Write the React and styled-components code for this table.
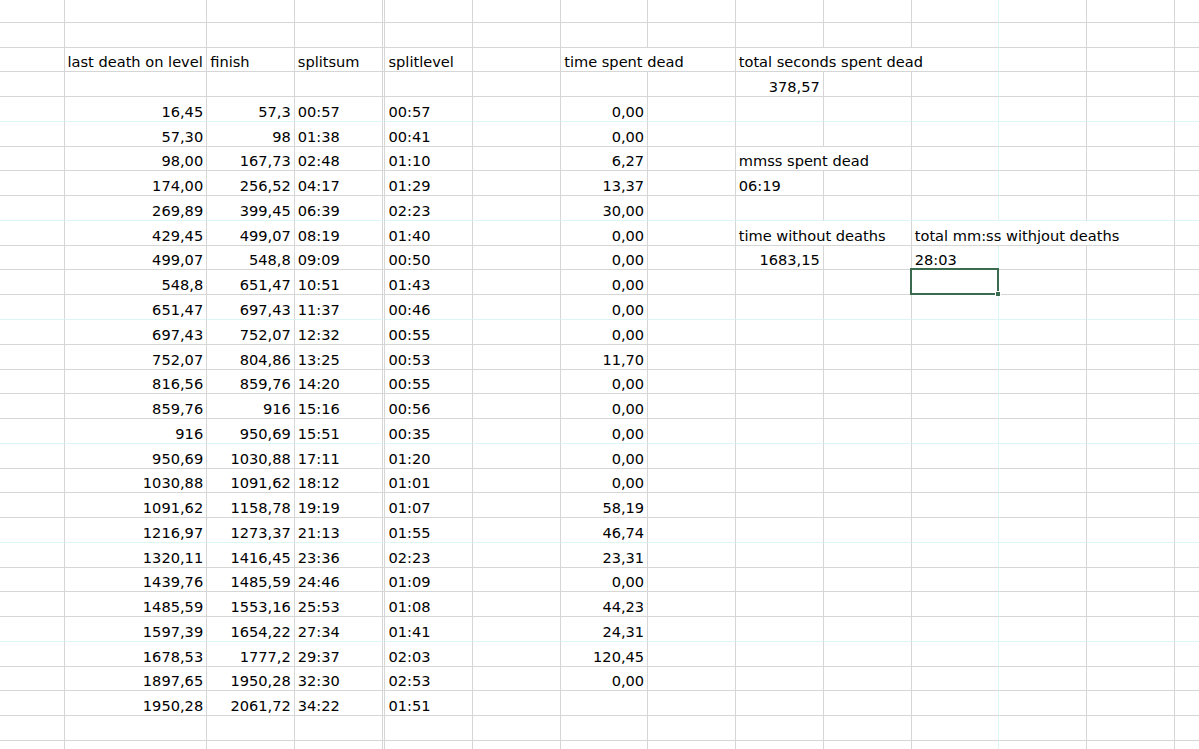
import React from "react";
import styled, { createGlobalStyle } from "styled-components";

const gridGray = "#d6d6d6";
const gridCyan = "#dcf5f5";
const selectGreen = "#3b6b4e";

const GlobalStyle = createGlobalStyle`
  html, body {
    margin: 0;
    padding: 0;
    background: #ffffff;
    overflow: hidden;
  }
`;

// right edges follow the sheet's gridlines (col C carries the frozen-pane double line)
const colWidths = [64.5, 142.7, 87.6, 90.7, 87.7, 88, 87, 87.6, 88, 88, 87.7, 87.7, 87.6, 88];
const cyanRows = [4, 8, 12, 17, 21, 25];
const ROWS = 31;

const Viewport = styled.div`
  width: 100vw;
  height: 100vh;
  overflow: hidden;
`;

const Sheet = styled.div`
  display: grid;
  grid-template-columns: ${colWidths.map((w) => `${w}px`).join(" ")};
  grid-template-rows: 22.8px;
  grid-auto-rows: 24.78px;
  width: max-content;
  font-family: "DejaVu Sans", "Liberation Sans", sans-serif;
  font-size: 14.6px;
  color: #000000;
`;

const Cell = styled.div`
  position: relative;
  box-sizing: border-box;
  display: flex;
  align-items: flex-end;
  justify-content: ${(p) => (p.$align === "right" ? "flex-end" : "flex-start")};
  padding: 0 3px 1px 3px;
  line-height: 17px;
  white-space: nowrap;
  overflow: ${(p) => (p.$selected ? "visible" : "hidden")};
  z-index: ${(p) => (p.$selected ? 1 : "auto")};
  grid-column: span ${(p) => p.$span || 1};
  border-bottom: 1px solid ${(p) => (p.$cyanRow ? gridCyan : gridGray)};
  border-right: ${(p) =>
    p.$double ? `3px double ${gridGray}` : `1px solid ${p.$cyanCol ? gridCyan : gridGray}`};
`;

const Selection = styled.div`
  position: absolute;
  top: -2px;
  left: -2px;
  right: -1px;
  bottom: -1px;
  border: 2px solid ${selectGreen};
  pointer-events: none;
`;

const FillHandle = styled.span`
  position: absolute;
  right: -4px;
  bottom: -4px;
  width: 6px;
  height: 6px;
  background: ${selectGreen};
  border: 1px solid #ffffff;
  box-sizing: border-box;
`;

const lastDeath = ["16,45", "57,30", "98,00", "174,00", "269,89", "429,45", "499,07", "548,8", "651,47", "697,43", "752,07", "816,56", "859,76", "916", "950,69", "1030,88", "1091,62", "1216,97", "1320,11", "1439,76", "1485,59", "1597,39", "1678,53", "1897,65", "1950,28"];
const finish = ["57,3", "98", "167,73", "256,52", "399,45", "499,07", "548,8", "651,47", "697,43", "752,07", "804,86", "859,76", "916", "950,69", "1030,88", "1091,62", "1158,78", "1273,37", "1416,45", "1485,59", "1553,16", "1654,22", "1777,2", "1950,28", "2061,72"];
const splitsum = ["00:57", "01:38", "02:48", "04:17", "06:39", "08:19", "09:09", "10:51", "11:37", "12:32", "13:25", "14:20", "15:16", "15:51", "17:11", "18:12", "19:19", "21:13", "23:36", "24:46", "25:53", "27:34", "29:37", "32:30", "34:22"];
const splitlevel = ["00:57", "00:41", "01:10", "01:29", "02:23", "01:40", "00:50", "01:43", "00:46", "00:55", "00:53", "00:55", "00:56", "00:35", "01:20", "01:01", "01:07", "01:55", "02:23", "01:09", "01:08", "01:41", "02:03", "02:53", "01:51"];
const deadTime = ["0,00", "0,00", "6,27", "13,37", "30,00", "0,00", "0,00", "0,00", "0,00", "0,00", "11,70", "0,00", "0,00", "0,00", "0,00", "0,00", "58,19", "46,74", "23,31", "0,00", "44,23", "24,31", "120,45", "0,00"];

const FIRST_DATA_ROW = 4;

// cells[row][col] = { text, align, span }
const buildCells = () => {
  const cells = {};
  const put = (r, c, cell) => {
    cells[r] = cells[r] || {};
    cells[r][c] = cell;
  };
  put(2, 1, { text: "last death on level" });
  put(2, 2, { text: "finish" });
  put(2, 3, { text: "splitsum" });
  put(2, 4, { text: "splitlevel" });
  put(2, 6, { text: "time spent dead", span: 2 });
  put(2, 8, { text: "total seconds spent dead", span: 3 });
  put(3, 8, { text: "378,57", align: "right" });
  put(6, 8, { text: "mmss spent dead", span: 2 });
  put(7, 8, { text: "06:19" });
  put(9, 8, { text: "time without deaths", span: 2 });
  put(9, 10, { text: "total mm:ss withjout deaths", span: 3 });
  put(10, 8, { text: "1683,15", align: "right" });
  put(10, 10, { text: "28:03" });
  put(11, 10, { selected: true });

  lastDeath.forEach((v, i) => {
    const r = FIRST_DATA_ROW + i;
    put(r, 1, { text: v, align: "right" });
    put(r, 2, { text: finish[i], align: "right" });
    put(r, 3, { text: splitsum[i] });
    put(r, 4, { text: splitlevel[i] });
    if (deadTime[i]) put(r, 6, { text: deadTime[i], align: "right" });
  });
  return cells;
};

const cells = buildCells();

const SheetRow = ({ r }) => {
  const out = [];
  const row = cells[r] || {};
  let c = 0;
  while (c < colWidths.length) {
    const cell = row[c] || {};
    const span = cell.span || 1;
    const last = c + span - 1;
    out.push(
      <Cell
        key={c}
        $span={span}
        $align={cell.align}
        $selected={cell.selected}
        $cyanRow={cyanRows.includes(r)}
        $double={last === 3}
        $cyanCol={last === 10}
      >
        {cell.text}
        {cell.selected && (
          <Selection>
            <FillHandle />
          </Selection>
        )}
      </Cell>
    );
    c += span;
  }
  return out;
};

export default function App() {
  return (
    <Viewport>
      <GlobalStyle />
      <Sheet>
        {Array.from({ length: ROWS }, (_, r) => (
          <SheetRow key={r} r={r} />
        ))}
      </Sheet>
    </Viewport>
  );
}
